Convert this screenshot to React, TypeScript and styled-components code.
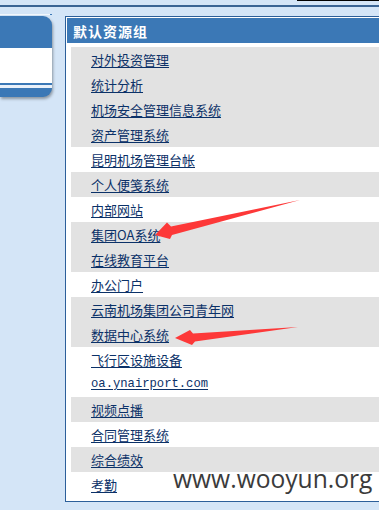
import React from 'react';
import styled, { createGlobalStyle } from 'styled-components';

const GlobalStyle = createGlobalStyle`
  html, body {
    margin: 0;
    padding: 0;
    background: #d4e5f7;
  }
`;

interface Resource {
  name: string;
  shaded: boolean;
  mono?: boolean;
}

const resources: Resource[] = [
  { name: '对外投资管理', shaded: true },
  { name: '统计分析', shaded: true },
  { name: '机场安全管理信息系统', shaded: true },
  { name: '资产管理系统', shaded: true },
  { name: '昆明机场管理台帐', shaded: false },
  { name: '个人便笺系统', shaded: true },
  { name: '内部网站', shaded: false },
  { name: '集团OA系统', shaded: true },
  { name: '在线教育平台', shaded: true },
  { name: '办公门户', shaded: false },
  { name: '云南机场集团公司青年网', shaded: true },
  { name: '数据中心系统', shaded: true },
  { name: '飞行区设施设备', shaded: false },
  { name: 'oa.ynairport.com', shaded: false, mono: true },
  { name: '视频点播', shaded: true },
  { name: '合同管理系统', shaded: false },
  { name: '综合绩效', shaded: true },
  { name: '考勤', shaded: false },
];

export default function App() {
  return (
    <Page>
      <GlobalStyle />

      {/* ---------------- TOP RULES ---------------- */}
      <TopStrip>
        <BlackRule />
      </TopStrip>
      <DarkRule />

      <Body>
        {/* ---------------- LEFT (cut off) PANEL ---------------- */}
        <LeftColumn>
          <LeftCap />
          <LeftBox>
            <LeftHead />
            <LeftContent />
            <LeftFoot />
          </LeftBox>
        </LeftColumn>

        {/* ---------------- RESOURCE GROUP ---------------- */}
        <GroupPanel>
          <GroupHeader>默认资源组</GroupHeader>
          <GroupList>
            {resources.map((r) => (
              <Row key={r.name} $shaded={r.shaded}>
                <Link href="#" $mono={r.mono}>
                  {r.name}
                </Link>
              </Row>
            ))}
          </GroupList>
        </GroupPanel>
      </Body>

      {/* annotation arrows drawn over the screenshot */}
      <Arrows width="379" height="510" viewBox="0 0 379 510">
        <polygon
          points="155,235 167,222.5 171,226.5 300,200 172,235 170,239"
          fill="#fd3838"
        />
        <polygon
          points="175,338 190,330 193,333.5 298,327 195,341.5 192,345"
          fill="#fd3838"
        />
      </Arrows>

      <Watermark>www.wooyun.org</Watermark>
    </Page>
  );
}

const Page = styled.div`
  position: relative;
  width: 379px;
  height: 510px;
  overflow: hidden;
  background: #d4e5f7;
  display: flex;
  flex-direction: column;
`;

const TopStrip = styled.div`
  height: 5px;
  display: flex;
  justify-content: flex-end;
`;

const BlackRule = styled.div`
  width: 82px;
  height: 1px;
  background: #000;
`;

const DarkRule = styled.div`
  height: 2px;
  background: #3a6494;
`;

const Body = styled.div`
  display: flex;
  align-items: flex-start;
  gap: 13px;
  padding-top: 7px;
`;

const LeftColumn = styled.div`
  flex: 0 0 52px;
  display: flex;
  flex-direction: column;
`;

const LeftCap = styled.div`
  width: 50px;
  height: 1px;
  background: #f2f7fc;
  border-right: 2px solid #3b78b6;
`;

const LeftBox = styled.div`
  margin-top: 1px;
  border-radius: 0 9px 9px 0;
  background: #3b78b6;
  overflow: hidden;
  box-shadow: 1px 2px 3px rgba(0, 0, 0, 0.35);
`;

const LeftHead = styled.div`
  height: 32px;
`;

const LeftContent = styled.div`
  height: 35px;
  background: #fff;
  border-bottom: 2px solid #3b78b6;
  box-shadow: 0 3px 0 #e9f1fa;
`;

const LeftFoot = styled.div`
  height: 12px;
`;

const GroupPanel = styled.div`
  flex: 0 0 400px;
  margin-top: 2px;
  padding: 1px;
  background: #fff;
  border: 1px solid #2c5f9a;
`;

const GroupHeader = styled.div`
  height: 25px;
  display: flex;
  align-items: center;
  padding-left: 6px;
  background: #3b78b6;
  color: #fff;
  font-family: 'Noto Sans CJK SC', sans-serif;
  font-size: 14px;
  font-weight: 700;
  letter-spacing: 1px;
`;

const GroupList = styled.div`
  margin: 4px 0 3px 4px;
  display: flex;
  flex-direction: column;
`;

const Row = styled.div<{ $shaded: boolean }>`
  height: 25px;
  display: flex;
  align-items: center;
  padding-left: 20px;
  background: ${(p) => (p.$shaded ? '#e2e2e2' : '#fff')};
`;

const Link = styled.a<{ $mono?: boolean }>`
  color: #0b3168;
  font-family: ${(p) =>
    p.$mono ? "'Liberation Mono', monospace" : "'Noto Sans CJK SC', sans-serif"};
  font-size: ${(p) => (p.$mono ? '12.2px' : '13px')};
  line-height: 13px;
  text-decoration: underline;
  text-underline-offset: 2px;
`;

const Arrows = styled.svg`
  position: absolute;
  left: 0;
  top: 0;
  pointer-events: none;
`;

const Watermark = styled.div`
  position: absolute;
  left: 173px;
  top: 467px;
  color: #3b3b3b;
  font-family: 'Open Sans', sans-serif;
  font-size: 24.6px;
  line-height: 24px;
  white-space: nowrap;
`;
